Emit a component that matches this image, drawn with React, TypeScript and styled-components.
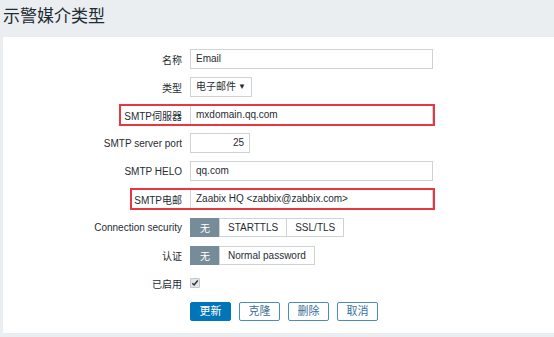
import styled, { createGlobalStyle } from 'styled-components'

const GlobalStyle = createGlobalStyle`
  html, body {
    margin: 0;
    padding: 0;
    background: #ebeef0;
  }
  body {
    font-family: "Liberation Sans", "Noto Sans CJK SC", sans-serif;
    color: #1f2c33;
  }
`

const Page = styled.div`
  width: 554px;
  height: 337px;
  overflow: hidden;
  background: #ebeef0;
`

const Header = styled.div`
  height: 37px;
  padding-left: 3px;
  box-sizing: border-box;
`

const Title = styled.h1`
  margin: 0;
  padding-top: 3px;
  font-family: "Noto Sans CJK SC", sans-serif;
  font-size: 17px;
  font-weight: 400;
  line-height: 24px;
  color: #1f2c33;
`

const Panel = styled.div`
  margin-left: 3px;
  background: #ffffff;
  padding: 12px 0 12px;
  display: flex;
  flex-direction: column;
  gap: 8px;
`

const Row = styled.div`
  position: relative;
  display: grid;
  grid-template-columns: 179px auto;
  column-gap: 8px;
  align-items: center;
  height: 20px;
`

const Label = styled.label`
  text-align: right;
  font-size: 10px;
  color: #1f2c33;
  white-space: nowrap;
`

const Control = styled.div`
  display: flex;
  align-items: center;
`

const Input = styled.div<{ $w: number; $right?: boolean }>`
  width: ${(p) => p.$w}px;
  height: 20px;
  box-sizing: border-box;
  border: 1px solid #cfd3d6;
  background: #fff;
  font-size: 10px;
  line-height: 18px;
  padding: 0 5px;
  color: #1f2c33;
  text-align: ${(p) => (p.$right ? 'right' : 'left')};
  white-space: nowrap;
  overflow: hidden;
`

const Select = styled.div`
  width: 62px;
  height: 20px;
  box-sizing: border-box;
  border: 1px solid #cfd3d6;
  background: #fff;
  font-size: 10px;
  line-height: 18px;
  padding: 0 5px;
  display: flex;
  justify-content: space-between;
  align-items: center;
`

const Arrow = styled.span`
  font-size: 8px;
  color: #1f2c33;
`

const Highlight = styled.div<{ $left: number }>`
  position: absolute;
  left: ${(p) => p.$left}px;
  right: 119px;
  top: -1px;
  bottom: -1px;
  border: 2px solid #e8383f;
  pointer-events: none;
`

const Segmented = styled.div`
  display: flex;
  height: 19px;
`

const Segment = styled.span<{ $active?: boolean }>`
  display: flex;
  align-items: center;
  padding: 0 ${(p) => (p.$active ? 9 : 8)}px;
  font-size: 10px;
  box-sizing: border-box;
  border: 1px solid ${(p) => (p.$active ? '#768d99' : '#cfd3d6')};
  margin-left: -1px;
  background: ${(p) => (p.$active ? '#768d99' : '#fff')};
  color: ${(p) => (p.$active ? '#fff' : '#1f2c33')};
  &:first-child {
    margin-left: 0;
  }
`

const Checkbox = styled.span`
  width: 10px;
  height: 10px;
  box-sizing: border-box;
  border: 1px solid #c4c8cb;
  background: #e3e5e7;
  display: flex;
  align-items: center;
  justify-content: center;
  border-radius: 1px;
`

const Buttons = styled.div`
  display: flex;
  gap: 8px;
`

const Button = styled.button<{ $primary?: boolean }>`
  height: 19px;
  width: 41px;
  padding: 0;
  box-sizing: border-box;
  border-radius: 2px;
  font-family: "Liberation Sans", "Noto Sans CJK SC", sans-serif;
  font-size: 11px;
  line-height: 17px;
  border: 1px solid ${(p) => (p.$primary ? '#0275b8' : '#4a8cc2')};
  background: ${(p) => (p.$primary ? '#0275b8' : '#fff')};
  color: ${(p) => (p.$primary ? '#fff' : '#3a6f9a')};
`

const App = () => {
  return (
    <Page>
      <GlobalStyle />
      <Header>
        <Title>示警媒介类型</Title>
      </Header>
      <Panel>
        <Row>
          <Label>名称</Label>
          <Control><Input $w={243}>Email</Input></Control>
        </Row>
        <Row>
          <Label>类型</Label>
          <Control>
            <Select>电子邮件<Arrow>▼</Arrow></Select>
          </Control>
        </Row>
        <Row>
          <Label>SMTP伺服器</Label>
          <Control><Input $w={243}>mxdomain.qq.com</Input></Control>
          <Highlight $left={116} />
        </Row>
        <Row>
          <Label>SMTP server port</Label>
          <Control><Input $w={60} $right>25</Input></Control>
        </Row>
        <Row>
          <Label>SMTP HELO</Label>
          <Control><Input $w={243}>qq.com</Input></Control>
        </Row>
        <Row>
          <Label>SMTP电邮</Label>
          <Control><Input $w={243}>Zaabix HQ &lt;zabbix@zabbix.com&gt;</Input></Control>
          <Highlight $left={127} />
        </Row>
        <Row>
          <Label>Connection security</Label>
          <Control>
            <Segmented>
              <Segment $active>无</Segment>
              <Segment>STARTTLS</Segment>
              <Segment>SSL/TLS</Segment>
            </Segmented>
          </Control>
        </Row>
        <Row>
          <Label>认证</Label>
          <Control>
            <Segmented>
              <Segment $active>无</Segment>
              <Segment>Normal password</Segment>
            </Segmented>
          </Control>
        </Row>
        <Row>
          <Label>已启用</Label>
          <Control>
            <Checkbox>
              <svg width="8" height="8" viewBox="0 0 8 8">
                <path d="M1.3 4.2 L3.1 6 L6.8 1.6" fill="none" stroke="#2b3338" strokeWidth="1.5" />
              </svg>
            </Checkbox>
          </Control>
        </Row>
        <Row>
          <span />
          <Buttons>
            <Button $primary>更新</Button>
            <Button>克隆</Button>
            <Button>删除</Button>
            <Button>取消</Button>
          </Buttons>
        </Row>
      </Panel>
    </Page>
  )
}

export default App
